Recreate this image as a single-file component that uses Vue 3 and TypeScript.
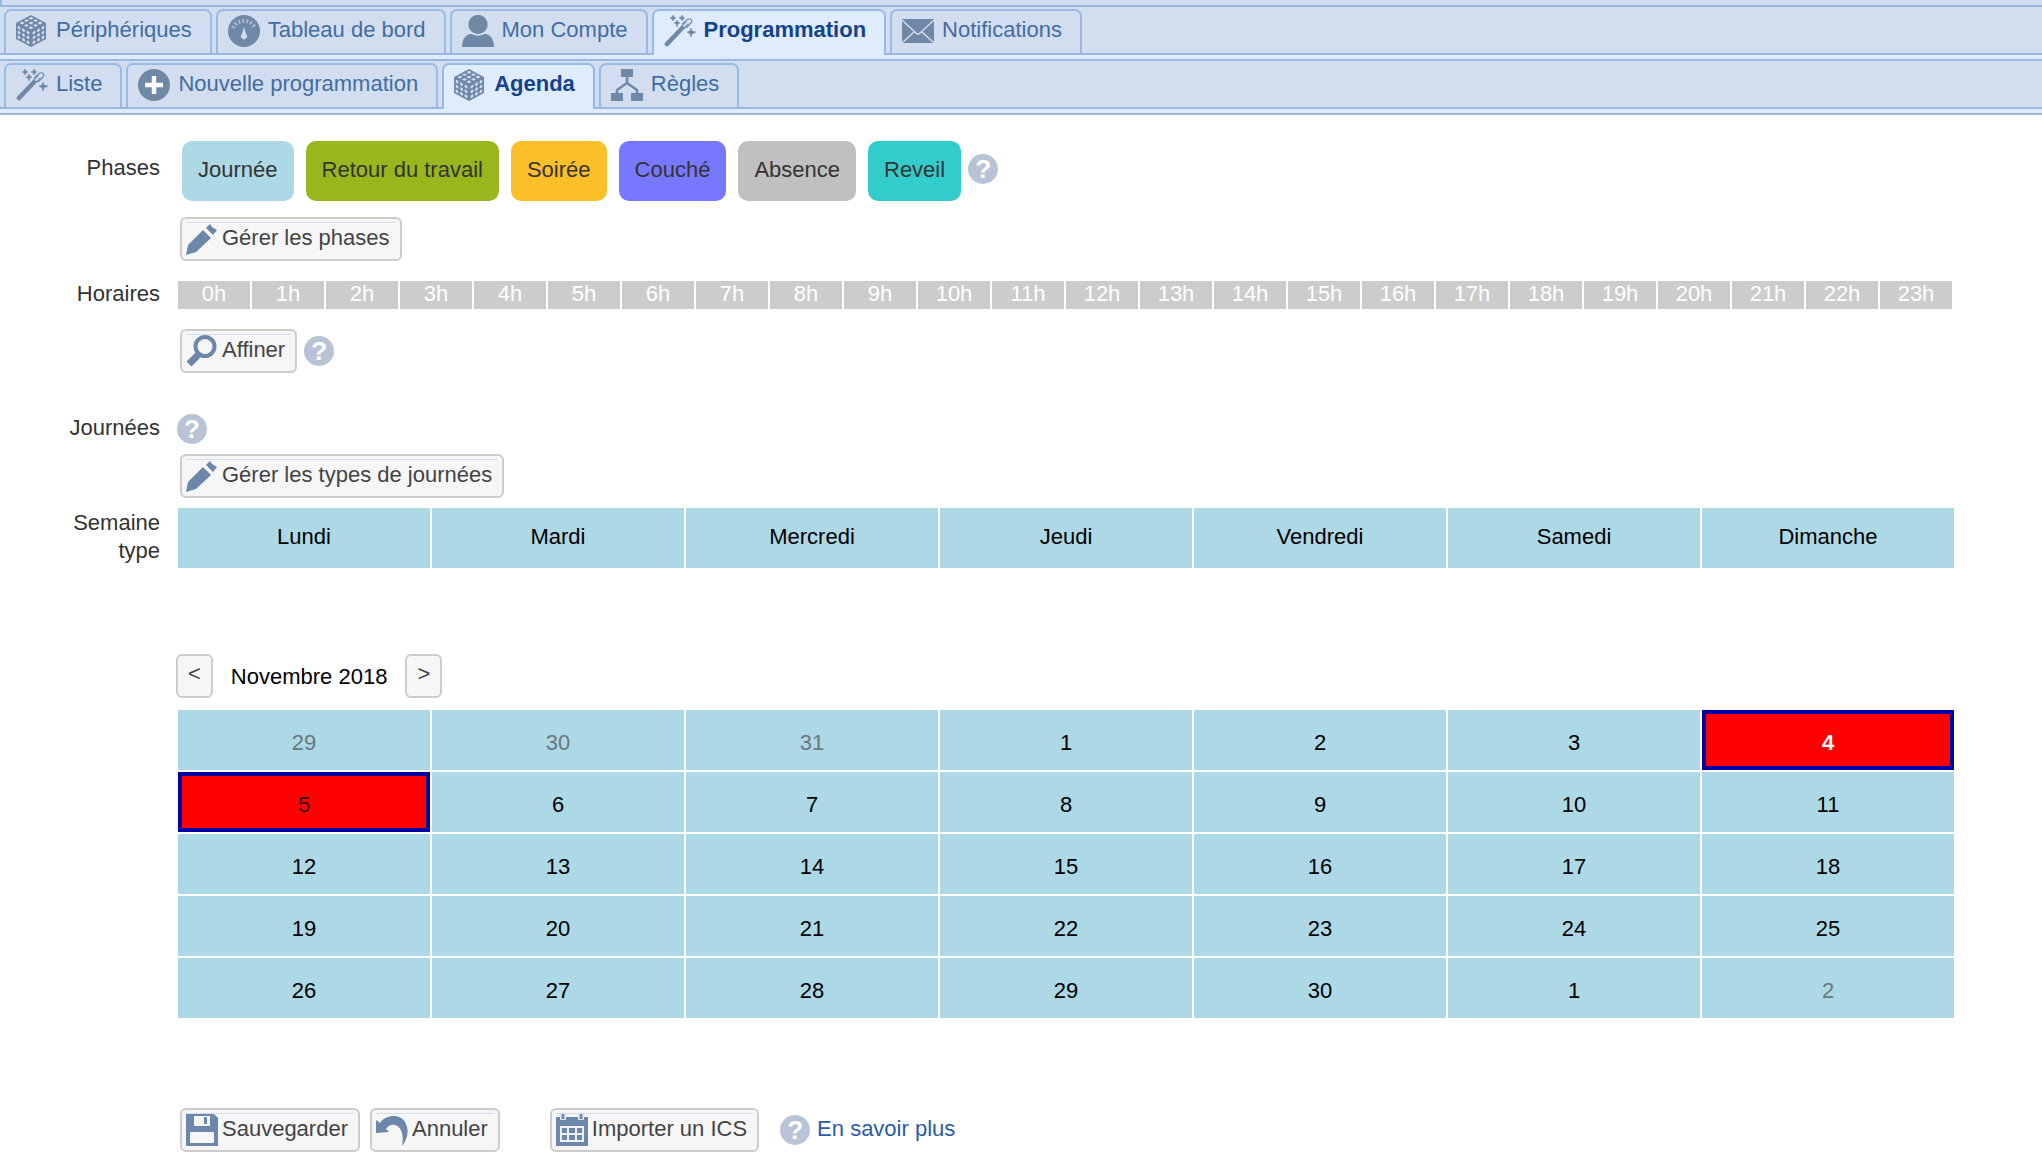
<script setup lang="ts">
import { defineComponent, h } from 'vue'
import type { VNode } from 'vue'

type IconName =
  | 'cube' | 'gauge' | 'user' | 'wand' | 'mail' | 'plus' | 'tree'
  | 'pencil' | 'search' | 'save' | 'undo' | 'calendar'

interface Tab { label: string; icon: IconName; active?: boolean }
interface Phase { label: string; color: string }
interface Day { n: number; state?: 'out' | 'today' | 'marked' }

const mainTabs: Tab[] = [
  { label: 'Périphériques', icon: 'cube' },
  { label: 'Tableau de bord', icon: 'gauge' },
  { label: 'Mon Compte', icon: 'user' },
  { label: 'Programmation', icon: 'wand', active: true },
  { label: 'Notifications', icon: 'mail' },
]

const subTabs: Tab[] = [
  { label: 'Liste', icon: 'wand' },
  { label: 'Nouvelle programmation', icon: 'plus' },
  { label: 'Agenda', icon: 'cube', active: true },
  { label: 'Règles', icon: 'tree' },
]

const phases: Phase[] = [
  { label: 'Journée', color: '#add8e6' },
  { label: 'Retour du travail', color: '#97b71c' },
  { label: 'Soirée', color: '#fbc028' },
  { label: 'Couché', color: '#7878ff' },
  { label: 'Absence', color: '#c0c0c0' },
  { label: 'Reveil', color: '#33cccc' },
]

const hours: string[] = Array.from({ length: 24 }, (_, i) => `${i}h`)
const weekDays: string[] = ['Lundi', 'Mardi', 'Mercredi', 'Jeudi', 'Vendredi', 'Samedi', 'Dimanche']

const days: Day[] = [
  { n: 29, state: 'out' }, { n: 30, state: 'out' }, { n: 31, state: 'out' },
  ...Array.from({ length: 30 }, (_, i): Day => ({
    n: i + 1,
    state: i + 1 === 4 ? 'today' : i + 1 === 5 ? 'marked' : undefined,
  })),
  { n: 1 }, { n: 2, state: 'out' },
]
const weeks: Day[][] = Array.from({ length: 5 }, (_, w) => days.slice(w * 7, w * 7 + 7))

const path = (d: string, attrs: Record<string, string | number> = {}): VNode => h('path', { d, ...attrs })

// The three visible faces of the cube: each matrix maps a unit square on a face.
const cubeFaces: string[] = [
  'matrix(15 8 -15 8 15 0)',
  'matrix(15 8 0 16 0 8)',
  'matrix(15 -8 0 16 15 16)',
]

const line = { fill: 'none', stroke: 'currentColor' }
const light = '#d4dfee'

const shapes: Record<IconName, () => VNode[]> = {
  cube: () => [
    path('M15 0L30 8V24L15 32L0 24V8Z'),
    ...cubeFaces.map((m) =>
      h('g', { transform: m, fill: light },
        Array.from({ length: 9 }, (_, i) =>
          h('rect', {
            x: 0.11 + (i % 3) * 0.3, y: 0.11 + Math.floor(i / 3) * 0.3,
            width: 0.18, height: 0.18, rx: 0.06,
          }))),
    ),
  ],
  gauge: () => [
    h('circle', { cx: 16, cy: 16, r: 16 }),
    path('M5 13A12 12 0 0 1 27 13', { fill: 'none', stroke: '#a9bad0', 'stroke-width': 4, 'stroke-dasharray': '2 2' }),
    path('M16 12L18 19A3 3 0 1 1 14 19Z', { fill: light }),
  ],
  user: () => [
    path('M0 32C0 25 3 20 8 19H24C29 20 32 25 32 32Z'),
    h('circle', { cx: 16, cy: 9.5, r: 10.5, stroke: light, 'stroke-width': 1.6 }),
  ],
  wand: () => [
    path('M3 29L22 9', { ...line, 'stroke-width': 4.6, 'stroke-linecap': 'round' }),
    path('M20 11L25 6', { fill: 'none', stroke: light, 'stroke-width': 2, 'stroke-linecap': 'round' }),
    path('M18 9L24 4C27 3 29 6 27 8L22 13', { ...line, 'stroke-width': 1.2 }),
    path('M9 0L10 2L12 3L10 4L9 6L8 4L6 3L8 2Z M18 0L19 2L21 3L19 4L18 6L17 4L15 3L17 2Z M13 5L14 7L16 8L14 9L13 12L12 9L10 8L12 7Z M27 13L28 16L32 17L28 19L27 22L26 19L23 17L26 16Z', { stroke: 'currentColor', 'stroke-width': 0.5 }),
  ],
  mail: () => [
    h('rect', { x: 0, y: 4, width: 32, height: 24 }),
    path('M0 5L14 18Q16 20 18 18L32 5M0 28L12 17M32 28L20 17', { fill: 'none', stroke: light, 'stroke-width': 1.4 }),
  ],
  plus: () => [
    h('circle', { cx: 16, cy: 16, r: 16 }),
    path('M16 7V25M7 16H25', { fill: 'none', stroke: '#fff', 'stroke-width': 4.4 }),
  ],
  tree: () => [
    h('rect', { x: 10, y: 0, width: 12, height: 8 }),
    path('M16 8V14M6 24V21L16 14L26 21V24', { ...line, 'stroke-width': 2.6, 'stroke-linejoin': 'round' }),
    h('rect', { x: 0, y: 24, width: 12, height: 8 }),
    h('rect', { x: 20, y: 24, width: 12, height: 8 }),
  ],
  pencil: () => [
    path('M0 32L2 22L17 7L25 15L10 29Z'),
    path('M20 5L24 1L26 4L31 7L27 12Z'),
  ],
  search: () => [
    h('circle', { cx: 19, cy: 11.5, r: 9.5, ...line, 'stroke-width': 4 }),
    path('M12 20L3 29', { ...line, 'stroke-width': 7 }),
  ],
  save: () => [
    path('M0 0H28L32 4V32H0Z'),
    path('M8 2H24V12H8Z', { fill: '#f6f6f6' }),
    path('M18 3H21V10H18Z'),
    h('rect', { x: 4, y: 18, width: 24, height: 11, rx: 1, fill: '#f6f6f6' }),
  ],
  undo: () => [
    path('M0 6L4 9C10 0 24 0 29 8C34 17 31 26 26 32C28 22 26 13 19 11C15 10 12 12 10 15L13 18L0 19Z'),
  ],
  calendar: () => [
    path('M0 3H32V32H0Z'),
    path('M4 0V6H10V0M22 0V6H28V0', { fill: '#dfe5ee' }),
    path('M7 0V5M25 0V5', { ...line, 'stroke-width': 2.6 }),
    h('rect', { x: 4, y: 12, width: 24, height: 16, fill: '#eef1f5' }),
    path('M6 14H11V19H6ZM13 14H19V19H13ZM21 14H26V19H21ZM6 21H11V26H6ZM13 21H19V26H13ZM21 21H26V26H21Z'),
  ],
}

const Icon = defineComponent({
  props: { name: { type: String, required: true } },
  setup: (props) => () =>
    h('svg', { viewBox: '0 0 32 32', width: 32, height: 32, fill: 'currentColor', 'aria-hidden': 'true' },
      shapes[props.name as IconName]()),
})
</script>

<template>
  <div class="page">
    <header>
      <div class="strip"></div>
      <nav class="bar" aria-label="Menu principal">
        <a v-for="t in mainTabs" :key="t.label" href="#" class="tab" :class="{ active: t.active }">
          <Icon class="icon" :name="t.icon" /><span class="text">{{ t.label }}</span>
        </a>
      </nav>
      <nav class="bar" aria-label="Programmation">
        <a v-for="t in subTabs" :key="t.label" href="#" class="tab" :class="{ active: t.active }">
          <Icon class="icon" :name="t.icon" /><span class="text">{{ t.label }}</span>
        </a>
      </nav>
    </header>

    <main class="form">
      <section class="row">
        <h2 class="label label-phases">Phases</h2>
        <div>
          <div class="chips">
            <button v-for="p in phases" :key="p.label" type="button" class="chip" :style="{ backgroundColor: p.color }">{{ p.label }}</button>
            <button type="button" class="help" aria-label="Aide sur les phases">?</button>
          </div>
          <div class="actions after-chips">
            <button type="button" class="btn"><Icon class="icon" name="pencil" /><span class="text">Gérer les phases</span></button>
          </div>
        </div>
      </section>

      <section class="row row-hours">
        <h2 class="label label-hours">Horaires</h2>
        <div>
          <ol class="hours">
            <li v-for="x in hours" :key="x">{{ x }}</li>
          </ol>
          <div class="actions after-hours">
            <button type="button" class="btn"><Icon class="icon" name="search" /><span class="text">Affiner</span></button>
            <button type="button" class="help" aria-label="Aide sur les horaires">?</button>
          </div>
        </div>
      </section>

      <section class="row row-days">
        <h2 class="label">Journées</h2>
        <div>
          <button type="button" class="help help-first" aria-label="Aide sur les journées">?</button>
          <div class="actions after-help">
            <button type="button" class="btn"><Icon class="icon" name="pencil" /><span class="text">Gérer les types de journées</span></button>
          </div>
        </div>
      </section>

      <section class="row row-week">
        <h2 class="label">Semaine type</h2>
        <ol class="week">
          <li v-for="d in weekDays" :key="d">{{ d }}</li>
        </ol>
      </section>

      <section class="calendar">
        <div class="month">
          <button type="button" class="btn step" aria-label="Mois précédent">&lt;</button>
          <h2 class="month-name">Novembre 2018</h2>
          <button type="button" class="btn step" aria-label="Mois suivant">&gt;</button>
        </div>
        <div class="days-box">
          <table class="days">
            <tbody>
              <tr v-for="(w, i) in weeks" :key="i">
                <td v-for="(d, j) in w" :key="j" :class="d.state">{{ d.n }}</td>
              </tr>
            </tbody>
          </table>
        </div>
      </section>

      <footer class="actions bottom">
        <button type="button" class="btn"><Icon class="icon" name="save" /><span class="text">Sauvegarder</span></button>
        <button type="button" class="btn cancel"><Icon class="icon" name="undo" /><span class="text">Annuler</span></button>
        <button type="button" class="btn import"><Icon class="icon" name="calendar" /><span class="text">Importer un ICS</span></button>
        <button type="button" class="help help-more" aria-label="Aide">?</button>
        <a href="#" class="more">En savoir plus</a>
      </footer>
    </main>
  </div>
</template>

<style>
body {
  margin: 0;
  background: #fff;
}
</style>

<style scoped>
.page,
.page button {
  font-family: "Liberation Sans", Arial, sans-serif;
  font-size: 22px;
  line-height: 28px;
}
.page button {
  margin: 0;
  cursor: pointer;
}
h2,
ol {
  margin: 0;
  padding: 0;
  font-size: 22px;
  font-weight: normal;
  list-style: none;
}
.icon {
  flex: none;
  color: #7088a8;
}
.text {
  line-height: 30px;
}

/* Tab bars */
header {
  display: flow-root;
  background: #deecfd;
  border-bottom: 2px solid #99b7e0;
}
.strip {
  height: 5px;
  background: #d0def0;
  border-left: 2px solid #99bbe8;
}
.bar {
  display: flex;
  gap: 4px;
  height: 44px;
  padding: 2px 4px 0;
  margin-bottom: 4px;
  background: #d0def0;
  border-top: 2px solid #99b7e0;
  border-bottom: 2px solid #99b7e0;
}
.tab {
  display: flex;
  gap: 8px;
  box-sizing: border-box;
  height: 44px;
  padding: 4px 18px 0 10px;
  border: 2px solid #99b9e8;
  border-bottom: 0;
  border-radius: 7px 7px 0 0;
  background: #d2deef;
  color: #416da3;
  text-decoration: none;
  white-space: nowrap;
}
.tab.active {
  height: 46px;
  background: #deecfd;
  color: #15428b;
  font-weight: bold;
}

/* Form rows */
.form {
  padding: 26px 88px 22px 0;
}
.row {
  display: grid;
  grid-template-columns: 160px minmax(0, 1fr);
  column-gap: 18px;
}
.row-hours {
  align-items: baseline;
  margin-top: 20px;
}
.row-days {
  margin-top: 40px;
}
.row-week {
  margin-top: 10px;
}
.label {
  padding-top: 1px;
  padding-left: 60px;
  color: #333;
  text-align: right;
}
.label-phases {
  padding-top: 13px;
}
.label-hours {
  padding-top: 0;
  line-height: 26px;
}
.chips,
.actions {
  display: flex;
  align-items: center;
}
.chips {
  gap: 12px;
  padding-left: 4px;
}
.page .chip {
  padding: 15px 16px 17px;
  border: 0;
  border-radius: 10px;
  color: #333;
}
.actions {
  padding-left: 2px;
}
.after-chips {
  margin-top: 16px;
}
.after-hours {
  margin-top: 20px;
}
.after-help {
  margin-top: 10px;
}

.page .btn {
  display: flex;
  gap: 4px;
  box-sizing: border-box;
  height: 44px;
  padding: 4px 10px 4px 4px;
  border: 2px solid #ccc;
  border-radius: 6px;
  background: linear-gradient(#d5deea, #d5deea) 4px 3px / calc(100% - 8px) 1px no-repeat, #f6f6f6;
  color: #444;
  white-space: nowrap;
}
.btn .icon {
  color: #6d87ab;
}
.page .step {
  padding: 4px 10px;
  background: #f6f6f6;
}
.page .help {
  width: 30px;
  height: 30px;
  margin-left: 7px;
  padding: 0;
  border: 0;
  border-radius: 50%;
  background: #b8c4d6;
  color: #fff;
  font-size: 26px;
  font-weight: bold;
  line-height: 30px;
}
.page .chips .help {
  margin: 0 0 4px -5px;
}
.page .help-first {
  display: block;
  margin: 1px 0 1px -1px;
}

.hours {
  display: flex;
}
.hours li {
  flex: 1 1 0;
  height: 28px;
  margin-right: 2px;
  background: #ccc;
  color: #fff;
  line-height: 26px;
  text-align: center;
}
.week {
  display: grid;
  grid-template-columns: repeat(7, 1fr);
  column-gap: 2px;
}
.week li {
  padding: 15px 0 17px;
  background: #add8e6;
  color: #000;
  text-align: center;
}

/* Month */
.calendar {
  margin-top: 86px;
  padding-left: 178px;
}
.month {
  display: flex;
  align-items: center;
  gap: 18px;
  margin-left: -2px;
}
.month-name {
  padding-top: 2px;
}
.days-box {
  margin: 10px -2px 0;
}
.days {
  width: 100%;
  table-layout: fixed;
  border-spacing: 2px;
}
.days td {
  box-sizing: border-box;
  height: 60px;
  padding: 19px 0 13px;
  background: #add8e6;
  color: #000;
  text-align: center;
}
.days .out {
  color: #6c777b;
}
.days .today,
.days .marked {
  padding: 15px 0 9px;
  border: 4px solid #0000a4;
  background: #f00;
}
.days .today {
  color: #fff;
  font-weight: bold;
}
.days .marked {
  color: #300;
}

.bottom {
  margin-top: 88px;
  padding-left: 180px;
}
.page .cancel {
  margin-left: 10px;
}
.page .import {
  margin-left: 50px;
}
.page .help-more {
  margin-left: 21px;
}
.more {
  margin-left: 7px;
  padding-bottom: 2px;
  color: #2a5caa;
  text-decoration: none;
}
</style>
